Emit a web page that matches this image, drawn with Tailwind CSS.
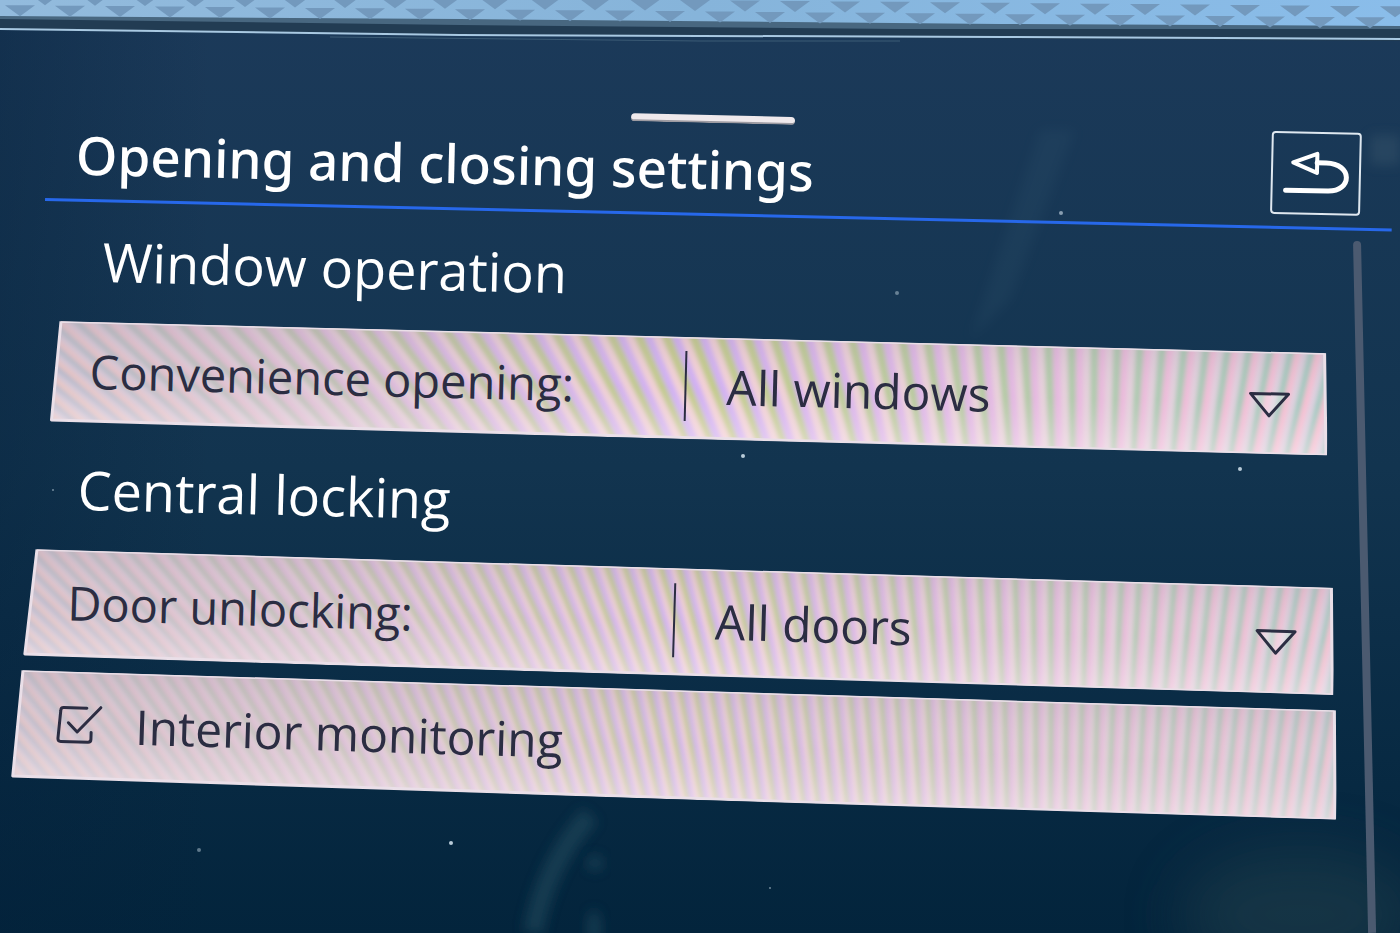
<!DOCTYPE html>
<html lang="en">
<head>
  <meta charset="UTF-8" />
  <meta name="viewport" content="width=device-width,initial-scale=1.0" />
  <title>Opening and closing settings</title>
  <!-- TailwindCSS -->
  <script src="https://cdn.jsdelivr.net/npm/@tailwindcss/browser@4"></script>
</head>
<body class="relative flex flex-col min-h-screen overflow-hidden bg-linear-to-b from-[#1c3a5a] via-[#12344f] to-[#03243c] text-white font-['Open_Sans','Noto_Sans',sans-serif]">

  <!-- Glass reflections and dust -->
  <svg class="absolute inset-0 w-full h-full pointer-events-none" viewBox="0 0 1400 933" preserveAspectRatio="none" aria-hidden="true">
    <defs>
      <filter id="soft" x="-50%" y="-50%" width="200%" height="200%"><feGaussianBlur stdDeviation="6" /></filter>
      <filter id="haze" x="-50%" y="-50%" width="200%" height="200%"><feGaussianBlur stdDeviation="30" /></filter>
      <linearGradient id="shade" x1="0" x2="1" y1="0" y2="0">
        <stop offset="0" stop-color="#04203a" stop-opacity=".35" />
        <stop offset=".15" stop-color="#04203a" stop-opacity="0" />
      </linearGradient>
    </defs>
    <rect width="1400" height="933" fill="url(#shade)" />
    <path d="M1040 130 L1075 130 L1010 300 L970 340 Z" fill="#3a6078" opacity=".15" filter="url(#soft)" />
    <path d="M1370 135 H1400 V165 H1370 Z" fill="#3d5a70" opacity=".4" filter="url(#soft)" />
    <path d="M590 815 Q545 865 533 933" fill="none" stroke="#1d4458" stroke-width="20" opacity=".7" filter="url(#soft)" />
    <g fill="#1d4458" opacity=".7" filter="url(#soft)">
      <ellipse cx="595" cy="863" rx="8" ry="8" /><ellipse cx="594" cy="928" rx="7" ry="18" />
    </g>
    <ellipse cx="1300" cy="915" rx="120" ry="65" fill="#2c4650" opacity=".45" filter="url(#haze)" />
    <g fill="#b9cbd8">
      <circle cx="1061" cy="213" r="2" opacity=".7" /><circle cx="897" cy="293" r="2" opacity=".5" />
      <circle cx="743" cy="456" r="2" /><circle cx="1240" cy="469" r="2" />
      <circle cx="451" cy="843" r="2" /><circle cx="199" cy="850" r="2" opacity=".5" />
      <circle cx="53" cy="490" r="1" opacity=".6" /><circle cx="770" cy="888" r="1" opacity=".6" />
    </g>
  </svg>

  <!-- Screen bezel -->
  <svg class="relative block w-full h-12" viewBox="0 0 1400 48" preserveAspectRatio="none" aria-hidden="true">
    <defs>
      <linearGradient id="trim" x1="0" x2="1" y1="0" y2="0">
        <stop offset="0" stop-color="#93bbdd" /><stop offset=".5" stop-color="#86b4da" /><stop offset="1" stop-color="#8abdea" />
      </linearGradient>
    </defs>
    <path d="M0 0 H1400 V41 L700 37 L0 29 Z" fill="#223c53" />
    <path d="M0 0 H1400 V29 L900 29 L460 25 L0 19 Z" fill="#486780" />
    <path d="M0 0 H1400 V26 L1000 24 L460 19 L0 16 Z" fill="url(#trim)" />
    <g id="trim-teeth" fill="#7399bd"></g>
    <path d="M0 29 L460 35 L1000 37 L1400 39" fill="none" stroke="#a9c9e2" stroke-width="2" />
    <path d="M330 37 L700 41 L900 41" fill="none" stroke="#3c5c76" stroke-width="1" />
  </svg>

  <!-- Title bar -->
  <header class="relative mt-[52px] ml-[45px] mr-2 border-b-3 border-[#2768ea] rotate-[1.3deg] origin-bottom-left">
    <div class="pr-4">
      <div class="mx-auto -mb-[5px] h-2 w-[164px] rounded-full bg-[#efe9ec] border-b-2 border-[#9d9ba2]"></div>
    </div>
    <div class="flex items-end justify-between pl-[30px] pr-8">
      <h1 class="pb-3 text-[53px]/[64px] font-medium font-['Noto_Sans',sans-serif]">Opening and closing settings</h1>
      <button type="button" aria-label="Back" class="mb-3 flex h-[83px] w-[90px] items-center justify-center rounded-sm border-2 border-[#dfe8f0]">
        <svg class="w-[68px] h-[48px]" viewBox="0 0 68 48" fill="none" stroke="#fff" stroke-width="5" stroke-linecap="round" stroke-linejoin="round" aria-hidden="true">
          <path d="M35 13 H44 C71 13 71 41 46 41 H4" />
          <path d="M35 4 L11 13 L35 23 Z" stroke-width="4" />
        </svg>
      </button>
    </div>
  </header>

  <div class="relative flex flex-1">
    <main class="flex-1">

      <h2 class="mt-7 ml-[102px] text-[54px]/[64px] rotate-[1.4deg] origin-bottom-left">Window operation</h2>

      <div class="relative mt-7 ml-[51px] mr-[15px] grid h-[102px] grid-cols-[635fr_644fr] items-center pb-1 text-[47px]/[64px] text-[#2b2d42] rotate-[1.45deg] origin-top-left">
        <svg class="absolute inset-0 w-full h-full" viewBox="0 0 1279 102" preserveAspectRatio="none" aria-hidden="true"
             data-row="a" data-points="10,0 1274,0 1278,102 3,99" data-period="24 26 19" data-lean="130 46 -25" data-strength="1"></svg>
        <label for="convenience" class="relative pl-10">Convenience opening:</label>
        <div class="relative flex h-[70px] items-center border-l-2 border-[#2b2d42]">
          <select id="convenience" class="w-full appearance-none bg-transparent pl-10 text-[48px]/[64px]">
            <option>All windows</option>
            <option>Driver window</option>
          </select>
          <svg class="pointer-events-none absolute right-[38px] mt-2 h-7 w-[42px]" viewBox="0 0 42 28" fill="#fff" fill-opacity=".25" stroke="#2b2d42" stroke-width="3" stroke-linejoin="round" aria-hidden="true"><path d="M2 3 H40 L21 25 Z" /></svg>
        </div>
      </div>

      <h2 class="mt-[34px] ml-[77px] text-[54px]/[64px] rotate-[1.4deg] origin-bottom-left">Central locking</h2>

      <div class="relative mt-7 ml-[25px] mr-2 grid h-[107px] grid-cols-[650fr_662fr] items-center pb-1 text-[47px]/[64px] text-[#2b2d42] rotate-[1.7deg] origin-top-left">
        <svg class="absolute inset-0 w-full h-full" viewBox="0 0 1312 107" preserveAspectRatio="none" aria-hidden="true"
             data-row="b" data-points="12,0 1307,0 1311,107 3,105" data-period="19 17 17" data-lean="120 34 -20" data-strength="0.9"></svg>
        <label for="door" class="relative pl-11">Door unlocking:</label>
        <div class="relative flex h-[74px] items-center border-l-2 border-[#2b2d42]">
          <select id="door" class="w-full appearance-none bg-transparent pl-10 text-[48px]/[64px]">
            <option>All doors</option>
            <option>Single door</option>
          </select>
          <svg class="pointer-events-none absolute right-[38px] mt-2 h-7 w-[42px]" viewBox="0 0 42 28" fill="#fff" fill-opacity=".25" stroke="#2b2d42" stroke-width="3" stroke-linejoin="round" aria-hidden="true"><path d="M2 3 H40 L21 25 Z" /></svg>
        </div>
      </div>

      <div class="relative mt-3.5 ml-[13px] mr-[5px] flex h-[109px] items-center pb-1 text-[48px]/[64px] text-[#2b2d42] rotate-[1.75deg] origin-top-left">
        <svg class="absolute inset-0 w-full h-full" viewBox="0 0 1327 109" preserveAspectRatio="none" aria-hidden="true"
             data-row="c" data-points="10,0 1322,0 1326,109 3,106" data-period="17 15 15" data-lean="100 26 -15" data-strength="0.8"></svg>
        <label class="relative flex items-center gap-8 pl-11">
          <span class="relative h-10 w-12">
            <input type="checkbox" checked class="absolute inset-0 h-full w-full opacity-0" />
            <svg class="h-full w-full" viewBox="0 0 48 40" fill="none" stroke="#2b2d42" stroke-width="3" stroke-linecap="round" stroke-linejoin="round" aria-hidden="true">
              <path d="M31 3 H8 Q5 3 5 6 L3 34 Q3 37 6 37 H33 Q36 37 36 34 V27" />
              <path d="M13 18 L22 27 L45 2" />
            </svg>
          </span>
          Interior monitoring
        </label>
      </div>
    </main>

    <!-- Scrollbar -->
    <div class="mt-10 mr-[39px] ml-2 w-2 rounded-t-full bg-[#4b5a70] rotate-[-1.25deg] origin-top"></div>
  </div>

  <script>
    const NS = 'http://www.w3.org/2000/svg';

    function add(parent, tag, attrs) {
      const el = document.createElementNS(NS, tag);
      for (const k in attrs) el.setAttribute(k, attrs[k]);
      parent.appendChild(el);
      return el;
    }

    // value at t (0..1) between left, middle and right
    function at(list, t) {
      t = Math.min(1, Math.max(0, t));
      return t < 0.5
        ? list[0] + (list[1] - list[0]) * t * 2
        : list[1] + (list[2] - list[1]) * (t - 0.5) * 2;
    }

    function mix(colors, t) {
      return 'rgb(' + [0, 1, 2].map(i => Math.round(at(colors.map(c => c[i]), t))).join(',') + ')';
    }

    const WARM = [[232, 194, 190], [206, 172, 246], [250, 190, 208]];
    const COOL = [[176, 182, 200], [192, 202, 130], [156, 200, 192]];
    const PALE = [[208, 196, 212], [244, 208, 212], [220, 208, 224]];

    // shimmering stripes inside each row
    document.querySelectorAll('svg[data-row]').forEach(svg => {
      const id = svg.dataset.row;
      const { width: w, height: h } = svg.viewBox.baseVal;
      const period = svg.dataset.period.split(' ').map(Number);
      const lean = svg.dataset.lean.split(' ').map(Number);
      const defs = add(svg, 'defs', {});
      add(add(defs, 'clipPath', { id: 'clip-' + id }), 'polygon', { points: svg.dataset.points });
      add(add(defs, 'filter', { id: 'blur-' + id }), 'feGaussianBlur', { stdDeviation: 2 });
      const fade = add(defs, 'linearGradient', { id: 'fade-' + id, x1: 0, y1: 0, x2: 0, y2: 1 });
      add(fade, 'stop', { offset: 0, 'stop-color': '#b0a0b0', 'stop-opacity': 0.25 });
      add(fade, 'stop', { offset: 0.5, 'stop-color': '#e8dce4', 'stop-opacity': 0.08 });
      add(fade, 'stop', { offset: 1, 'stop-color': '#fff4f8', 'stop-opacity': 0.4 });

      const body = add(svg, 'g', { 'clip-path': `url(#clip-${id})` });
      add(body, 'rect', { width: w, height: h, fill: '#d9cad3' });
      const lines = add(body, 'g', { filter: `url(#blur-${id})`, opacity: svg.dataset.strength });
      for (let x = -120; x < w + 60;) {
        const t = x / w, p = at(period, t), d = at(lean, t) / 2;
        [WARM, PALE, COOL].forEach((c, i) => {
          const o = x + i * p / 3;
          add(lines, 'path', {
            d: `M${o - d * 1.2} ${-h * 0.1} L${o + d * 1.2} ${h * 1.1}`,
            stroke: mix(c, t), 'stroke-width': p / 2.4
          });
        });
        x += p;
      }
      add(body, 'rect', { width: w, height: h, fill: `url(#fade-${id})` });
      add(svg, 'polygon', { points: svg.dataset.points, fill: 'none', stroke: '#eadfe8', 'stroke-width': 3, 'stroke-linejoin': 'round' });
    });

    // trim pattern along the bezel
    const teeth = document.getElementById('trim-teeth');
    for (let i = 0; i < 29; i++) {
      const x = 20 + i * 50, y = 5 + x * 0.009;
      add(teeth, 'path', { d: `M${x - 15} ${y} H${x + 15} L${x} ${y + 11} Z` });
      add(teeth, 'path', { d: `M${x + 10} ${y - 11} H${x + 40} L${x + 25} ${y} Z` });
    }
  </script>
</body>
</html>
